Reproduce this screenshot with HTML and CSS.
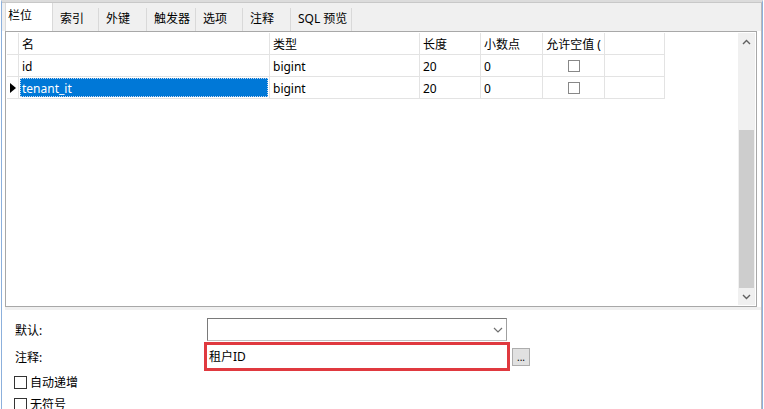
FILE: index.html
```html
<!DOCTYPE html>
<html lang="zh-CN">
<head>
    <meta charset="UTF-8">
    <title>表设计器</title>
    <link rel="stylesheet" href="styles.css">
</head>
<body>
    <div class="window">
        <div class="tabbar">
            <div class="tab active" style="width: 48px">栏位</div>
            <div class="tab" style="width: 46px">索引</div>
            <div class="tab" style="width: 48px">外键</div>
            <div class="tab" style="width: 49px">触发器</div>
            <div class="tab" style="width: 47px">选项</div>
            <div class="tab" style="width: 48px">注释</div>
            <div class="tab" style="width: 61px">SQL 预览</div>
        </div>

        <div class="panel">
            <div class="grid">
                <div class="table">
                    <div class="row header">
                        <div class="cell ind"></div>
                        <div class="cell c-name">名</div>
                        <div class="cell c-type">类型</div>
                        <div class="cell c-len">长度</div>
                        <div class="cell c-dec">小数点</div>
                        <div class="cell c-null">允许空值 (</div>
                        <div class="cell c-extra"></div>
                    </div>
                    <div class="row">
                        <div class="cell ind"></div>
                        <div class="cell c-name">id</div>
                        <div class="cell c-type">bigint</div>
                        <div class="cell c-len">20</div>
                        <div class="cell c-dec">0</div>
                        <div class="cell c-null"><span class="box"></span></div>
                        <div class="cell c-extra"></div>
                    </div>
                    <div class="row">
                        <div class="cell ind"><span class="arrow"></span></div>
                        <div class="cell c-name selected"><span>tenant_it</span></div>
                        <div class="cell c-type">bigint</div>
                        <div class="cell c-len">20</div>
                        <div class="cell c-dec">0</div>
                        <div class="cell c-null"><span class="box"></span></div>
                        <div class="cell c-extra"></div>
                    </div>
                </div>
                <div class="scrollbar">
                    <div class="sb-btn">
                        <svg width="9" height="6" viewBox="0 0 9 6"><path d="M1 5 L4.5 1.5 L8 5" fill="none" stroke="#606060" stroke-width="1.4"/></svg>
                    </div>
                    <div class="sb-track"></div>
                    <div class="sb-thumb"></div>
                    <div class="sb-btn">
                        <svg width="9" height="6" viewBox="0 0 9 6"><path d="M1 1 L4.5 4.5 L8 1" fill="none" stroke="#606060" stroke-width="1.4"/></svg>
                    </div>
                </div>
            </div>

            <div class="form">
                <div class="form-row r-default">
                    <label class="label">默认:</label>
                    <div class="select">
                        <svg width="10" height="6" viewBox="0 0 10 6"><path d="M1 1 L5 5 L9 1" fill="none" stroke="#707070" stroke-width="1.2"/></svg>
                    </div>
                </div>
                <div class="form-row r-comment">
                    <label class="label">注释:</label>
                    <div class="input-mark">
                        <div class="input">租户ID</div>
                    </div>
                    <button class="dots">...</button>
                </div>
                <div class="check-row"><span class="check"></span>自动递增</div>
                <div class="check-row"><span class="check"></span>无符号</div>
            </div>
        </div>
    </div>
</body>
</html>
```

FILE: styles.css
```css
* {
    margin: 0;
    padding: 0;
    box-sizing: border-box;
}

body {
    width: 764px;
    height: 409px;
    overflow: hidden;
    background: #ffffff;
    color: #000;
    font-family: "Noto Sans", "Noto Sans CJK SC", sans-serif;
    font-size: 12px;
}

.window {
    height: 409px;
    margin-left: 1px;
    width: 762px;
    border-left: 1px solid #8cb0dc;
    border-right: 1px solid #8cb0dc;
    border-top: 2px solid #dcdcdc;
    display: flex;
    flex-direction: column;
}

/* Tabs */
.tabbar {
    display: flex;
    align-items: flex-end;
    height: 29px;
    padding-left: 3px;
    background: #f0f0f0;
    border-top: 1px solid #c8c8c8;
    border-right: 1px solid #b8b8b8;
}

.tab {
    height: 23px;
    line-height: 22px;
    padding-left: 7px;
    border-right: 1px solid #d9d9d9;
    color: #000;
    white-space: nowrap;
}

.tab.active {
    height: 28px;
    line-height: 26px;
    padding-left: 2px;
    background: #ffffff;
    border-left: 1px solid #d9d9d9;
    padding-bottom: 4px;
}

/* Main panel */
.panel {
    flex: 1;
    background: #ffffff;
    border-right: 1px solid #b8b8b8;
    padding-left: 3px;
}

.grid {
    display: flex;
    width: 752px;
    height: 276px;
    border: 1px solid #a8a8a8;
    padding: 1px;
}

.table {
    flex: 1;
}

.row {
    display: flex;
    height: 22px;
}

.cell {
    height: 22px;
    line-height: 23px;
    padding-left: 3px;
    border-right: 1px solid #e3e3e3;
    border-bottom: 1px solid #e3e3e3;
    white-space: nowrap;
    overflow: hidden;
}

.ind {
    width: 12px;
    position: relative;
}
.c-name { width: 251px; }
.c-type { width: 150px; }
.c-len { width: 61px; }
.c-dec { width: 62px; }
.c-null { width: 62px; text-align: center; padding-left: 0; }
.c-extra { width: 60px; }

.arrow {
    position: absolute;
    left: 3px;
    top: 6px;
    border-top: 5px solid transparent;
    border-bottom: 5px solid transparent;
    border-left: 6px solid #000;
}

.selected {
    padding: 1px;
}

.selected span {
    display: block;
    height: 19px;
    line-height: 19px;
    padding-left: 1px;
    background: #0078d7;
    color: #fff;
    border: 1px dotted #c8d8ee;
}

.box {
    display: inline-block;
    width: 12px;
    height: 12px;
    margin-top: 5px;
    border: 1px solid #888;
    background: #fff;
    vertical-align: top;
}

/* Scrollbar */
.scrollbar {
    width: 17px;
    background: #f0f0f0;
    display: flex;
    flex-direction: column;
}

.sb-btn {
    height: 17px;
    display: flex;
    align-items: center;
    justify-content: center;
}

.sb-track {
    height: 80px;
}

.sb-thumb {
    flex: 1;
    margin: 0 1px;
    background: #cdcdcd;
}

/* Form */
.form {
    padding: 8px 0 0 10px;
    border-top: 3px solid #f0f0f0;
}

.form-row {
    display: flex;
    align-items: center;
}

.label {
    width: 189px;
}

.r-default {
    height: 23px;
}

.r-default .label {
    width: 192px;
}

.select {
    width: 300px;
    height: 23px;
    border: 1px solid #7a7a7a;
    border-right-color: #a0a0a0;
    border-bottom-color: #c0c0c0;
    display: flex;
    align-items: center;
    justify-content: flex-end;
    padding-right: 3px;
}

.r-comment {
    height: 29px;
    margin-top: 1px;
}

.input-mark {
    width: 306px;
    height: 29px;
    border: 3px solid #e0393f;
}

.input {
    height: 23px;
    line-height: 23px;
    padding-left: 2px;
    background: #fff;
}

.dots {
    width: 18px;
    height: 18px;
    margin-left: 2px;
    background: #e1e1e1;
    border: 1px solid #adadad;
    font-family: "Noto Sans", sans-serif;
    font-size: 10px;
    line-height: 12px;
    color: #000;
}

.check-row {
    display: flex;
    align-items: center;
    height: 22px;
    margin-left: -1px;
}

.check {
    width: 13px;
    height: 13px;
    border: 1px solid #333;
    background: #fff;
    margin-right: 3px;
}
```
